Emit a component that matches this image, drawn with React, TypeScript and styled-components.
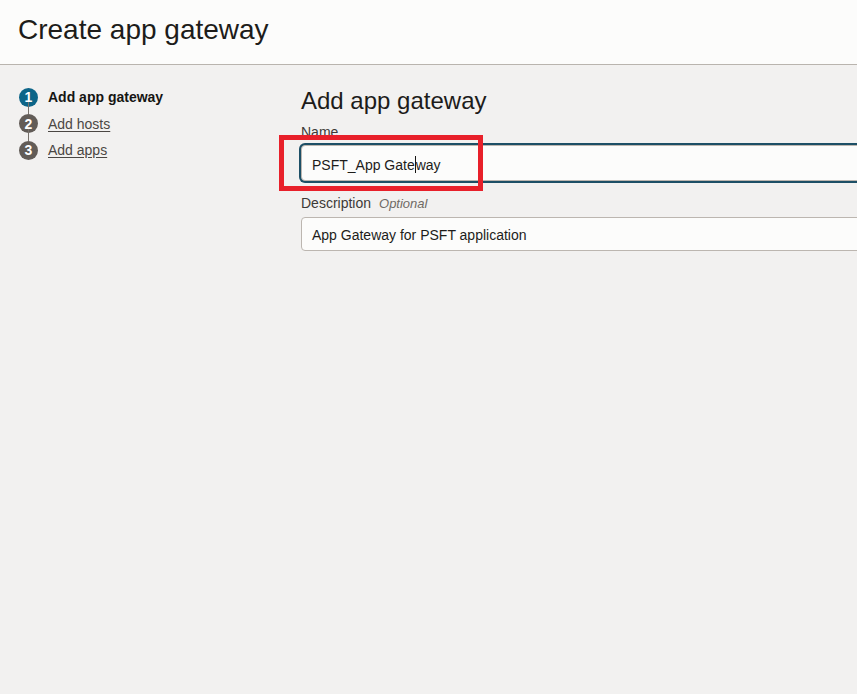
import React from "react";
import styled, { createGlobalStyle } from "styled-components";

const Global = createGlobalStyle`
  html, body { margin: 0; padding: 0; background: #f2f1f0; overflow: hidden; }
  body { font-family: "Liberation Sans", Arial, sans-serif; color: #161513; }
  * { box-sizing: border-box; }
`;

const Page = styled.div`
  width: 857px;
  height: 694px;
  display: flex;
  flex-direction: column;
  overflow: hidden;
`;

const Header = styled.header`
  height: 65px;
  flex: none;
  background: #fcfcfb;
  border-bottom: 1px solid #b9b4ae;
  padding: 14px 0 0 18px;
`;

const Title = styled.h1`
  margin: 0;
  font-size: 28px;
  font-weight: 400;
  line-height: 32px;
  color: #1d1c1a;
`;

const Body = styled.div`
  display: flex;
  flex: 1;
  padding-top: 19px;
`;

const Sidebar = styled.nav`
  width: 301px;
  flex: none;
  padding-left: 19px;
`;

const StepList = styled.ol`
  list-style: none;
  margin: 0;
  padding: 0;
`;

const Step = styled.li<{ $last?: boolean }>`
  display: flex;
  align-items: center;
  gap: 10px;
  height: 26.5px;
  position: relative;
  &::after {
    content: "";
    display: ${(p) => (p.$last ? "none" : "block")};
    position: absolute;
    left: 9px;
    top: 18px;
    width: 1px;
    height: 12px;
    background: #77716b;
  }
`;

const Circle = styled.span<{ $active?: boolean }>`
  width: 19px;
  height: 19px;
  border-radius: 50%;
  background: ${(p) => (p.$active ? "#0d6588" : "#625c57")};
  color: #fff;
  font-size: 14px;
  font-weight: 700;
  display: flex;
  align-items: center;
  justify-content: center;
  flex: none;
`;

const StepLabel = styled.span<{ $active?: boolean }>`
  font-size: 14px;
  color: ${(p) => (p.$active ? "#161513" : "#4b4743")};
  font-weight: ${(p) => (p.$active ? 700 : 400)};
  text-decoration: ${(p) => (p.$active ? "none" : "underline")};
  text-underline-offset: 2px;
`;

const Main = styled.main`
  flex: 1;
  display: flex;
  flex-direction: column;
  min-width: 0;
  padding-top: 3px;
`;

const SectionTitle = styled.h2`
  margin: 0 0 9px;
  font-size: 24px;
  font-weight: 400;
  line-height: 28px;
  color: #1d1c1a;
`;

const Field = styled.div`
  display: flex;
  flex-direction: column;
  width: 640px;
  margin-bottom: 14px;
`;

const Label = styled.label`
  font-size: 14px;
  line-height: 16px;
  color: #3d3a37;
  margin-bottom: 5px;
`;

const Optional = styled.span`
  font-style: italic;
  color: #6f6a65;
  margin-left: 8px;
  font-size: 13px;
`;

const InputWrap = styled.div`
  position: relative;
`;

const InputBox = styled.div<{ $focused?: boolean }>`
  height: ${(p) => (p.$focused ? "36px" : "34px")};
  border: 1px solid #bcb6b0;
  border-radius: 4px;
  background: #fcfcfb;
  box-shadow: ${(p) => (p.$focused ? "0 0 0 2px #1d4f66" : "none")};
  display: flex;
  align-items: center;
  padding: ${(p) => (p.$focused ? "3px 0 0 10px" : "2px 0 0 10px")};
  font-size: 14px;
  color: #1d1c1a;
  white-space: nowrap;
`;

const Caret = styled.span`
  display: inline-block;
  width: 1px;
  height: 17px;
  background: #161513;
`;

const Annotation = styled.div`
  position: absolute;
  left: -22px;
  top: -10px;
  width: 204px;
  height: 56px;
  border: 5px solid #e8202a;
  pointer-events: none;
`;

export default function App() {
  return (
    <Page>
      <Global />
      <Header>
        <Title>Create app gateway</Title>
      </Header>
      <Body>
        <Sidebar>
          <StepList>
            <Step>
              <Circle $active>1</Circle>
              <StepLabel $active>Add app gateway</StepLabel>
            </Step>
            <Step>
              <Circle>2</Circle>
              <StepLabel>Add hosts</StepLabel>
            </Step>
            <Step $last>
              <Circle>3</Circle>
              <StepLabel>Add apps</StepLabel>
            </Step>
          </StepList>
        </Sidebar>
        <Main>
          <SectionTitle>Add app gateway</SectionTitle>
          <Field>
            <Label>Name</Label>
            <InputWrap>
              <InputBox $focused>
                PSFT_App Gate<Caret />way
              </InputBox>
              <Annotation />
            </InputWrap>
          </Field>
          <Field>
            <Label>
              Description<Optional>Optional</Optional>
            </Label>
            <InputBox>App Gateway for PSFT application</InputBox>
          </Field>
        </Main>
      </Body>
    </Page>
  );
}
